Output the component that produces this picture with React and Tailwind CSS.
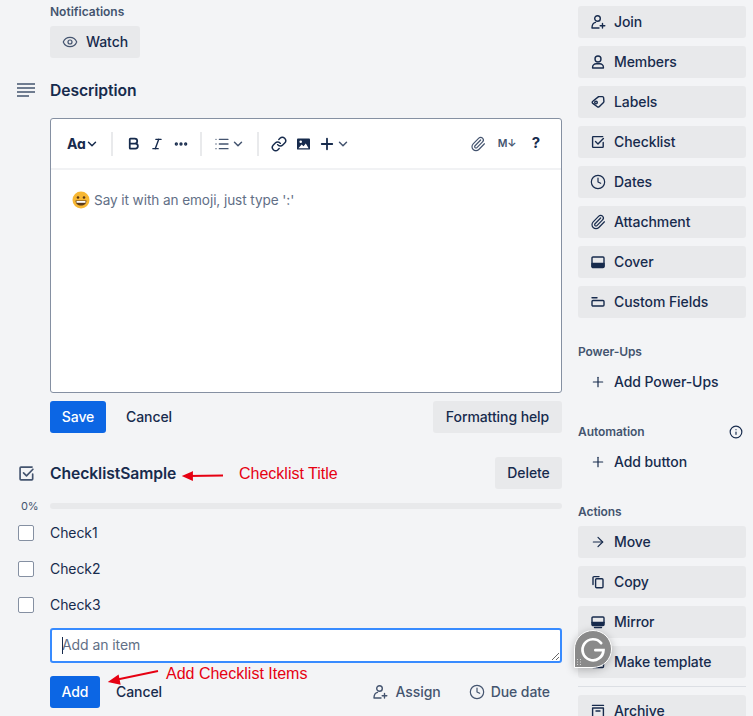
import { Bold, ChevronDown, Clock, Ellipsis, Eye, Info, Italic, Link, List, Paperclip, Plus, ArrowRight } from 'lucide-react';

const Svg = ({ children, className = 'w-4 h-4' }) => (
  <svg viewBox="0 0 16 16" fill="none" stroke="currentColor" strokeWidth="1.4" strokeLinecap="round" strokeLinejoin="round" className={className}>
    {children}
  </svg>
);

const JoinIcon = () => (
  <Svg>
    <circle cx="7.5" cy="4.5" r="2.8" />
    <path d="M2 14c0-3 1-5 3.5-5.600M2 14h7M12.500 9.500v4.500M10.200 11.800h4.600" />
  </Svg>
);
const MemberIcon = () => (
  <Svg>
    <circle cx="8" cy="5" r="3" />
    <path d="M2.600 14v-.8c0-2 1.700-3.400 3.600-3.400h3.600c1.900 0 3.600 1.400 3.600 3.400v.8z" />
  </Svg>
);
const LabelIcon = () => (
  <Svg>
    <path d="M8.600 2.600h3.900c.6 0 1 .4 1.100 1l.3 3.800c0 .4-.1.7-.4 1l-4.300 4.300c-.6.5-1.300.5-1.900 0l-4.500-3.300c-.8-.6-.8-1.600 0-2.200z" />
    <circle cx="6" cy="8.600" r="1.300" />
  </Svg>
);
const CheckGlyph = () => (
  <>
    <path d="M13.200 8.500v4.200c0 .4-.3.7-.7.7H3.300a.7.7 0 0 1-.7-.7V3.300c0-.4.3-.7.7-.7h9.400" />
    <path d="M5.500 7.500 8 10l5.400-5.600" />
  </>
);
const CheckIcon = () => <Svg><CheckGlyph /></Svg>;
const CoverIcon = () => (
  <Svg>
    <rect x="2" y="3" width="12" height="10" rx="1" />
    <path d="M2 9.500h12v3a1 1 0 0 1-1 1H3a1 1 0 0 1-1-1z" fill="currentColor" />
  </Svg>
);
const FieldsIcon = () => (
  <Svg>
    <path d="M2 3.800h5" />
    <rect x="2" y="6.500" width="12" height="5.500" rx="1" />
  </Svg>
);
const CopyIcon = () => (
  <Svg>
    <path d="M3 10.500V3.600c0-.6.4-1 1-1h5" />
    <rect x="5.600" y="4.800" width="7.400" height="9" rx="1" />
  </Svg>
);
const MirrorIcon = () => (
  <Svg>
    <rect x="2" y="3" width="12" height="8.500" rx="1" />
    <path d="M2 8.500h12M4.500 13.500h7" />
    <path d="M2.500 9h11v2h-11z" fill="currentColor" />
  </Svg>
);
const TemplateIcon = () => (
  <Svg>
    <rect x="2.500" y="2.500" width="11" height="11" rx="1" />
    <path d="M2.500 10h11" />
  </Svg>
);
const ArchiveIcon = () => (
  <Svg>
    <path d="M2.500 2.400h11M2.600 5h10.800v9H2.600zM6 8h4" />
  </Svg>
);

const iconClass = 'w-4 h-4';

const SideButton = ({ icon, label, plain }) => (
  <div className={`flex items-center gap-2 h-8 px-3 rounded-[3px] text-sm font-medium text-[#172b4d] ${plain ? '' : 'bg-[#e8e9eb]'}`}>
    <span className="flex w-4 justify-center shrink-0">{icon}</span>
    {label}
  </div>
);

const SideLabel = ({ children, extra }) => (
  <div className="mt-[25px] mb-[7px] flex h-4 items-center justify-between pt-[2px] text-xs font-semibold text-[#44546f]">
    {children}
    {extra}
  </div>
);

const Separator = ({ className }) => <span className={`h-6 w-[2px] bg-[#e9eaec] ${className}`} />;

const Toolbar = () => (
  <div className="flex h-[51px] items-center border-b-2 border-[#f1f2f4] pl-4 pr-[21px] text-[#172b4d]">
    <span className="w-[18px] text-sm font-bold tracking-[-0.5px]">Aɑ</span>
    <ChevronDown className="w-[14px] h-[14px]" strokeWidth={2.5} />
    <Separator className="ml-3 mr-[13px]" />
    <Bold className="w-[15px] h-[15px]" strokeWidth={2.8} />
    <Italic className="ml-[9px] w-[14px] h-[14px]" strokeWidth={2.4} />
    <Ellipsis className="ml-[9px] w-4 h-4" strokeWidth={3} />
    <Separator className="ml-[11px] mr-3" />
    <List className="w-4 h-4 text-[#44546f]" strokeWidth={2} />
    <ChevronDown className="ml-[1px] w-[14px] h-[14px] text-[#44546f]" strokeWidth={2.5} />
    <Separator className="ml-3 mr-3" />
    <Link className="w-4 h-4" strokeWidth={2.2} />
    <svg viewBox="0 0 14 12" className="ml-[10px] w-[13px] h-3">
      <rect width="14" height="12" rx="1" fill="#172b4d" />
      <circle cx="4" cy="3.500" r="1.400" fill="#fff" />
      <path d="M1.500 10.500 5 6.500l2 2 2.500-3 3 5z" fill="#fff" />
    </svg>
    <Plus className="ml-[8px] w-[18px] h-[18px]" strokeWidth={2.400} />
    <ChevronDown className="w-[14px] h-[14px] text-[#44546f]" strokeWidth={2.5} />
    <Paperclip className="ml-auto w-4 h-4 text-[#44546f]" strokeWidth={1.8} />
    <span className="ml-[12px] w-4 text-[10.5px] font-semibold whitespace-nowrap text-[#44546f]">M↓</span>
    <span className="ml-[18px] text-[15px] font-bold">?</span>
  </div>
);

const Emoji = () => (
  <svg viewBox="0 0 18 18" className="w-[18px] h-[18px] shrink-0">
    <circle cx="9" cy="9" r="8.500" fill="#f7b733" />
    <circle cx="6" cy="6.500" r="1.300" fill="#5b3a1a" />
    <circle cx="12" cy="6.500" r="1.300" fill="#5b3a1a" />
    <path d="M3.500 9.500h11c0 3-2.300 5-5.500 5s-5.500-2-5.500-5z" fill="#5b3a1a" />
    <path d="M4.500 10h9v1.800h-9z" fill="#fff" />
  </svg>
);

const Box = () => <span className="h-4 w-4 rounded-[2px] border border-[#8590a2] bg-white" />;

const CheckRow = ({ label }) => (
  <div className="flex h-9 items-center">
    <span className="flex w-[50px] pl-[18px]"><Box /></span>
    <span className="text-sm text-[#172b4d]">{label}</span>
  </div>
);

export default function App() {
  return (
    <div className="relative flex h-[716px] overflow-hidden bg-[#f3f4f6] tracking-[-0.08px] [font-family:Inter,sans-serif]">
      <main className="w-[562px] shrink-0 pt-[4px]">
        <div className="pl-[50px]">
          <div className="text-xs leading-4 font-semibold tracking-normal text-[#44546f]">Notifications</div>
          <div className="mt-[6px] flex h-8 w-[90px] items-center gap-2 rounded-[3px] bg-[#e8e9eb] px-3 text-sm font-medium text-[#172b4d]">
            <Eye className="w-4 h-4 text-[#44546f]" strokeWidth={1.8} />
            Watch
          </div>
        </div>

        <div className="mt-5 flex h-6 items-center">
          <span className="w-[50px] pl-[17px] text-[#44546f]">
            <svg viewBox="0 0 18 14" className="w-[18px] h-[14px]" stroke="currentColor" strokeWidth="1.7">
              <path d="M0 1h18M0 5h18M0 9h18M0 13h12" />
            </svg>
          </span>
          <h2 className="pt-[2px] text-[15.7px] font-semibold text-[#172b4d]">Description</h2>
        </div>

        <div className="ml-[50px] mt-4 h-[275px] rounded-[3px] border border-[#8590a2] bg-white">
          <Toolbar />
          <div className="mt-[20px] flex items-center gap-1 pl-[21px] text-[13.6px] text-[#626f86]">
            <Emoji />
            Say it with an emoji, just type ':'
          </div>
        </div>

        <div className="ml-[50px] mt-2 flex h-8 items-center text-sm font-medium">
          <span className="flex h-8 w-14 items-center justify-center rounded-[3px] bg-[#0c66e4] text-white">Save</span>
          <span className="ml-5 text-[#172b4d]">Cancel</span>
          <span className="ml-auto flex h-8 w-[129px] items-center justify-center rounded-[3px] bg-[#e8e9eb] text-[#172b4d]">Formatting help</span>
        </div>

        <div className="mt-6 flex h-8 items-center">
          <span className="w-[50px] pl-[17px] text-[#44546f]">
            <Svg className="w-[19px] h-[19px]"><CheckGlyph /></Svg>
          </span>
          <h2 className="pt-[2px] text-[15.7px] font-semibold text-[#172b4d]">ChecklistSample</h2>
          <span className="ml-auto flex h-8 w-[67px] items-center justify-center rounded-[3px] bg-[#e8e9eb] text-sm font-medium text-[#172b4d]">Delete</span>
        </div>

        <div className="mt-2 flex h-[18px] items-center">
          <span className="w-[50px] pl-[21px] text-[11px] text-[#44546f]">0%</span>
          <span className="h-[6px] flex-1 rounded-[3px] bg-[#e8e9eb]" />
        </div>

        <CheckRow label="Check1" />
        <CheckRow label="Check2" />
        <CheckRow label="Check3" />

        <div className="relative ml-[50px] mt-[5px] h-[35px]">
          <textarea
            readOnly
            placeholder="Add an item"
            className="block h-[35px] min-h-[35px] w-full rounded-[3px] border-2 border-[#388bff] bg-white px-[10px] py-[5px] text-sm leading-5 outline-none placeholder:text-[#626f86]"
          />
          <span className="absolute left-3 top-[9px] h-[17px] w-px bg-[#172b4d]" />
        </div>

        <div className="ml-[50px] mt-[13px] flex h-8 items-center text-sm font-medium">
          <span className="flex h-8 w-[50px] items-center justify-center rounded-[3px] bg-[#0c66e4] text-white">Add</span>
          <span className="ml-4 text-[#172b4d]">Cancel</span>
          <span className="ml-auto flex items-center gap-2 text-[#44546f]"><JoinIcon />Assign</span>
          <span className="ml-7 mr-3 flex items-center gap-[6px] text-[#44546f]"><Clock className={iconClass} strokeWidth={1.8} />Due date</span>
        </div>
      </main>

      <aside className="ml-4 w-[168px] shrink-0 pt-[6px]">
        <div className="flex flex-col gap-2">
          <SideButton icon={<JoinIcon />} label="Join" />
          <SideButton icon={<MemberIcon />} label="Members" />
          <SideButton icon={<LabelIcon />} label="Labels" />
          <SideButton icon={<CheckIcon />} label="Checklist" />
          <SideButton icon={<Clock className={iconClass} strokeWidth={1.8} />} label="Dates" />
          <SideButton icon={<Paperclip className={iconClass} strokeWidth={1.8} />} label="Attachment" />
          <SideButton icon={<CoverIcon />} label="Cover" />
          <SideButton icon={<FieldsIcon />} label="Custom Fields" />
        </div>

        <SideLabel>Power-Ups</SideLabel>
        <SideButton plain icon={<Plus className={iconClass} strokeWidth={1.8} />} label="Add Power-Ups" />

        <SideLabel extra={<Info className="mr-[3px] w-[14px] h-[14px] text-[#172b4d]" strokeWidth={2} />}>Automation</SideLabel>
        <SideButton plain icon={<Plus className={iconClass} strokeWidth={1.8} />} label="Add button" />

        <SideLabel>Actions</SideLabel>
        <div className="flex flex-col gap-2">
          <SideButton icon={<ArrowRight className={iconClass} strokeWidth={1.8} />} label="Move" />
          <SideButton icon={<CopyIcon />} label="Copy" />
          <SideButton icon={<MirrorIcon />} label="Mirror" />
          <SideButton icon={<TemplateIcon />} label="Make template" />
        </div>
        <div className="mt-2 mb-2 h-px bg-[#dcdfe4]" />
        <SideButton icon={<ArchiveIcon />} label="Archive" />
      </aside>

      {/* red notes drawn on top of the screenshot */}
      <svg className="absolute inset-0 h-[716px] w-[753px] pointer-events-none" viewBox="0 0 753 716" fill="none" stroke="#e60012" strokeWidth="1.8">
        <path d="M223 475.500 188 476" />
        <path d="m192 472.500-8 3.500 8 3.500z" fill="#e60012" />
        <path d="M158 671 115 680" />
        <path d="m118 676-8 5.500 9.500 2z" fill="#e60012" />
      </svg>
      <span className="absolute left-[239px] top-[464px] text-base leading-[19px] tracking-normal text-[#e60012] [font-family:'Liberation_Sans',sans-serif]">Checklist Title</span>
      <span className="absolute left-[166px] top-[664px] text-base leading-[19px] tracking-normal text-[#e60012] [font-family:'Liberation_Sans',sans-serif]">Add Checklist Items</span>

      {/* floating grammar widget */}
      <div className="absolute left-[574px] top-[630px] flex h-[38px] w-[38px] items-center justify-center rounded-full rounded-bl-none border border-white bg-[#8a8a8a] shadow-[0_2px_8px_rgba(0,0,0,0.25)]">
        <svg viewBox="0 0 24 24" className="w-[28px] h-[28px]" fill="none" stroke="#fff" strokeWidth="2.300" strokeLinecap="round">
          <path d="M19 7a9 9 0 1 0 2 6h-7" />
        </svg>
        <svg viewBox="0 0 4 6" className="absolute bottom-[2px] left-[2px] w-[4px] h-[6px]" fill="#d8d8d8">
          <path d="M0 0h1v1H0zM3 0h1v1H3zM0 2.500h1v1H0zM3 2.500h1v1H3zM0 5h1v1H0zM3 5h1v1H3z" />
        </svg>
      </div>
    </div>
  );
}
